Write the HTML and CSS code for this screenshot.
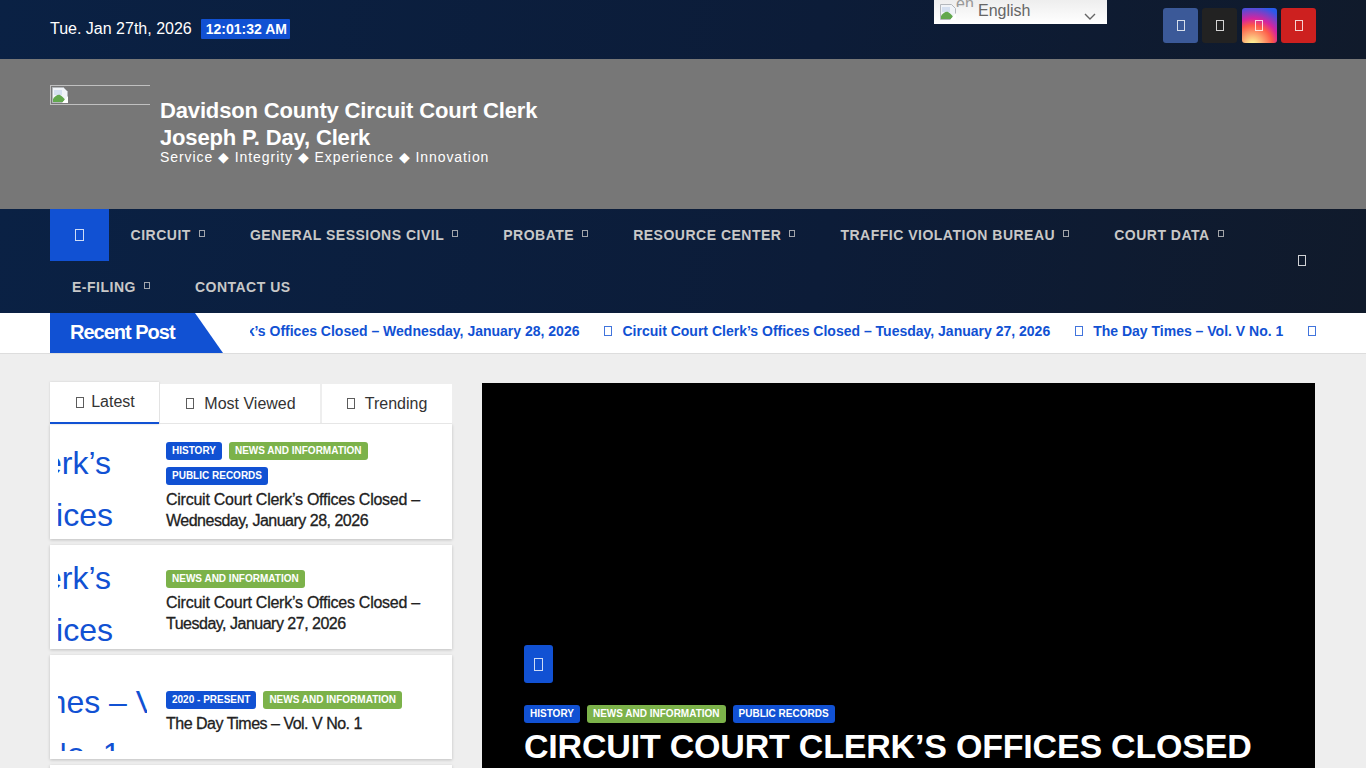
FILE: index.html
```html
<!DOCTYPE html>
<html lang="en">
  <head>
    <meta charset="UTF-8" />
    <meta name="viewport" content="width=device-width, initial-scale=1" />
    <title>Davidson County Circuit Court Clerk</title>
    <link rel="stylesheet" href="styles.css">
  </head>
  <body>
    <svg class="sprite" width="0" height="0" aria-hidden="true">
      <symbol id="broken" viewBox="0 0 16 16">
        <path d="M.5.5h11l4 4v11H.5z" fill="#f1f4f8" stroke="#b4b8bc" />
        <path d="M2 3h8v5H2z" fill="#d5e0f0" />
        <path d="M1 15v-3c2-3 5-5 7-4s4 3 5 5l-2 2z" fill="#62a84e" />
        <path d="M10 16l6-7v7z" fill="#fff" />
      </symbol>
    </svg>

    <header class="top-bar">
      <div class="date-wrap">
        <span class="date">Tue. Jan 27th, 2026</span>
        <span class="time">12:01:32 AM</span>
      </div>
      <div class="lang">
        <svg class="broken-icon"><use href="#broken" /></svg>
        <span class="lang-alt">en</span>
        <span class="lang-name">English</span>
        <svg class="lang-caret" viewBox="0 0 12 8"><path d="M1 1l5 5 5-5" fill="none" stroke="#666" stroke-width="1.4" /></svg>
      </div>
      <div class="socials">
        <a class="social fb"><i class="tofu"></i></a>
        <a class="social tw"><i class="tofu"></i></a>
        <a class="social ig"><i class="tofu"></i></a>
        <a class="social yt"><i class="tofu"></i></a>
      </div>
    </header>

    <div class="brand">
      <div class="logo-img"><svg class="broken-icon"><use href="#broken" /></svg></div>
      <div class="brand-text">
        <div class="brand-title">Davidson County Circuit Court Clerk<br />Joseph P. Day, Clerk</div>
        <div class="brand-sub">Service ◆ Integrity ◆ Experience ◆ Innovation</div>
      </div>
    </div>

    <nav class="nav">
      <ul class="nav-list">
        <li class="nav-home"><i class="tofu tofu-home"></i></li>
        <li class="nav-item">CIRCUIT <i class="tofu tofu-caret"></i></li>
        <li class="nav-item">GENERAL SESSIONS CIVIL <i class="tofu tofu-caret"></i></li>
        <li class="nav-item">PROBATE <i class="tofu tofu-caret"></i></li>
        <li class="nav-item">RESOURCE CENTER <i class="tofu tofu-caret"></i></li>
        <li class="nav-item">TRAFFIC VIOLATION BUREAU <i class="tofu tofu-caret"></i></li>
        <li class="nav-item">COURT DATA <i class="tofu tofu-caret"></i></li>
        <li class="nav-item">E-FILING <i class="tofu tofu-caret"></i></li>
        <li class="nav-item">CONTACT US</li>
      </ul>
      <i class="tofu nav-search"></i>
    </nav>

    <div class="ticker-bar">
      <div class="ticker-label">Recent Post</div>
      <div class="ticker">
        <div class="ticker-track">
          <span class="ticker-text">Circuit Court Clerk’s Offices Closed – Wednesday, January 28, 2026</span>
          <i class="tofu tofu-tick"></i>
          <span class="ticker-text">Circuit Court Clerk’s Offices Closed – Tuesday, January 27, 2026</span>
          <i class="tofu tofu-tick"></i>
          <span class="ticker-text">The Day Times – Vol. V No. 1</span>
          <i class="tofu tofu-tick"></i>
        </div>
      </div>
    </div>

    <main class="content">
      <section class="side">
        <div class="tabs">
          <div class="tab active"><i class="tofu tofu-tab"></i> Latest</div>
          <div class="tab tab-views"><i class="tofu tofu-tab"></i> Most Viewed</div>
          <div class="tab tab-trend"><i class="tofu tofu-tab"></i> Trending</div>
        </div>

        <article class="post post-first">
          <div class="thumb"><span>Circuit Court Clerk’s</span><span>Offices</span></div>
          <div class="post-body">
            <div class="tags">
              <a class="tag blue">History</a>
              <a class="tag green">News and Information</a>
              <a class="tag blue">Public Records</a>
            </div>
            <h4 class="post-title">Circuit Court Clerk’s Offices Closed – <span class="tight">Wednesday, January 28, 2026</span></h4>
          </div>
        </article>

        <article class="post">
          <div class="thumb"><span>Circuit Court Clerk’s</span><span>Offices</span></div>
          <div class="post-body">
            <div class="tags">
              <a class="tag green">News and Information</a>
            </div>
            <h4 class="post-title">Circuit Court Clerk’s Offices Closed – <span class="tight">Tuesday, January 27, 2026</span></h4>
          </div>
        </article>

        <article class="post post-day">
          <div class="thumb thumb-day"><span>The Day Times – Vol.</span><span>No. 1</span></div>
          <div class="post-body">
            <div class="tags">
              <a class="tag blue">2020 - Present</a>
              <a class="tag green">News and Information</a>
            </div>
            <h4 class="post-title"><span class="tight">The Day Times – Vol. V No. 1</span></h4>
          </div>
        </article>

        <article class="post"></article>
      </section>

      <section class="hero">
        <a class="hero-btn"><i class="tofu tofu-hero"></i></a>
        <div class="tags hero-tags">
          <a class="tag blue">History</a>
          <a class="tag green">News and Information</a>
          <a class="tag blue">Public Records</a>
        </div>
        <h2 class="hero-title">Circuit Court Clerk’s Offices Closed</h2>
      </section>
    </main>
  </body>
</html>
```

FILE: styles.css
```css
* {
  box-sizing: border-box;
}
html,
body {
  height: 768px;
  overflow: hidden;
}
body {
  margin: 0;
  font-family: "Liberation Sans", Arial, sans-serif;
  background-color: #eeeeee;
  color: #212121;
}
.sprite {
  position: absolute;
}
a {
  text-decoration: none;
}
/* icon font never loaded on the original, glyphs show as empty boxes */
.tofu {
  display: inline-block;
  width: 8px;
  height: 11px;
  border: 1px solid currentColor;
  flex: none;
  opacity: 0.8;
}
.broken-icon {
  width: 16px;
  height: 16px;
  display: block;
  flex: none;
}

.top-bar {
  height: 59px;
  padding: 0 50px;
  display: flex;
  justify-content: space-between;
  align-items: flex-start;
  color: #fff;
  background: linear-gradient(100deg, #0a2144, #0c1c38 60%, #101a2b);
}
.date-wrap {
  display: flex;
  align-items: center;
  gap: 9px;
  margin-top: 19px;
  width: 884px;
}
.date {
  font-size: 16px;
}
.time {
  background: #1151d3;
  font-size: 14px;
  font-weight: 700;
  padding: 1px 3px 1px 5px;
  height: 20px;
  line-height: 18px;
  border-radius: 1px;
}
.lang {
  width: 173px;
  height: 24px;
  background: linear-gradient(#eee, #fff);
  color: #666;
  font-size: 16px;
  display: flex;
  align-items: center;
  padding-left: 6px;
  position: relative;
  margin-right: 56px;
}
.lang-alt {
  font-size: 16px;
  line-height: 8px;
  height: 7px;
  width: 22px;
  overflow: hidden;
  color: #999;
  align-self: flex-start;
}
.lang-name {
  margin-top: -3px;
}
.lang-caret {
  width: 12px;
  height: 8px;
  position: absolute;
  right: 11px;
  top: 13px;
}
.socials {
  display: flex;
  gap: 4.3px;
  margin-top: 8px;
  margin-left: auto;
}
.social {
  width: 35px;
  height: 35px;
  border-radius: 3px;
  display: flex;
  align-items: center;
  justify-content: center;
  color: #fff;
}
.fb {
  background: #3b5998;
}
.tw {
  background: #222;
}
.ig {
  background: radial-gradient(circle at 30% 107%, #fdf497 0%, #fdf497 5%, #fd5949 45%, #d6249f 60%, #285aeb 90%);
}
.yt {
  background: #cd201f;
}

.brand {
  height: 150px;
  background: #777777;
  padding: 26px 50px 0;
  display: flex;
  gap: 10px;
  color: #fff;
}
.logo-img {
  width: 100px;
  height: 20px;
  border: 1px solid #c0c0c0;
  border-right: 0;
  padding: 1px;
}
.brand-text {
  padding-top: 12px;
}
.brand-title {
  font-size: 22px;
  font-weight: 700;
  line-height: 27px;
  letter-spacing: -0.15px;
}
.brand-sub {
  font-size: 14px;
  line-height: 12px;
  letter-spacing: 0.93px;
}

.nav {
  height: 104px;
  padding: 0 50px;
  display: flex;
  align-items: center;
  justify-content: space-between;
  background: linear-gradient(100deg, #0a2144, #0c1c38 60%, #101a2b);
  color: #c8c8c8;
}
.nav-list {
  list-style: none;
  margin: 0;
  padding: 0;
  display: flex;
  flex-wrap: wrap;
  width: 1220px;
}
.nav-home {
  width: 58.6px;
  height: 52px;
  background: #1151d3;
  color: #fff;
  display: flex;
  align-items: center;
  justify-content: center;
}
.tofu-home {
  width: 9px;
  height: 12px;
}
.nav-item {
  height: 52px;
  padding: 0 23px 0 22px;
  display: flex;
  align-items: center;
  gap: 8px;
  font-size: 14px;
  font-weight: 700;
  letter-spacing: 0.5px;
}
.tofu-caret {
  width: 6px;
  height: 7px;
  margin-top: -3px;
}
.nav-search {
  color: #fff;
  width: 8px;
  height: 11px;
  margin: -2px 10px 0 0;
}

.ticker-bar {
  height: 41px;
  padding: 0 50px;
  background: #fff;
  border-bottom: 1px solid #ddd;
  display: flex;
}
.ticker-label {
  width: 173px;
  height: 40px;
  padding-left: 20px;
  line-height: 38px;
  background: #1151d3;
  clip-path: polygon(0 0, 145px 0, 100% 100%, 0 100%);
  color: #fff;
  font-size: 20px;
  font-weight: 700;
  letter-spacing: -1px;
}
.ticker {
  margin-left: 27px;
  width: 1066px;
  overflow: hidden;
}
.ticker-track {
  display: flex;
  align-items: center;
  height: 36px;
  white-space: nowrap;
  margin-left: -120px;
  color: #1151d3;
  font-size: 14px;
  font-weight: 700;
}
.tofu-tick {
  width: 8px;
  height: 10px;
  margin: 0 10px 0 25px;
}

.content {
  padding: 29px 50px 0;
  display: flex;
  gap: 30px;
}
.side {
  width: 402px;
  flex: none;
}
.tabs {
  display: flex;
  height: 41px;
  gap: 1px;
  color: #333;
  font-size: 16px;
}
.tab {
  background: #fff;
  height: 39px;
  margin-top: 1px;
  display: flex;
  align-items: center;
  justify-content: center;
  gap: 10px;
}
.tab.active {
  width: 109px;
  height: 42px;
  margin-top: -1px;
  gap: 7px;
  padding-left: 2px;
  border-bottom: 2px solid #1151d3;
  box-shadow: 0 0 2px #ccc;
}
.tab-views {
  width: 160px;
  padding-left: 2px;
}
.tab-trend {
  width: 130px;
  margin-left: 1px;
}
.tofu-tab {
  width: 8px;
  height: 11px;
}
.post {
  background: #fff;
  height: 104px;
  margin-bottom: 6px;
  display: flex;
  align-items: center;
  box-shadow: 0 1px 3px rgba(0, 0, 0, 0.2);
}
.post-first {
  height: 115px;
}
.thumb {
  width: 89px;
  margin: 8px 0 8px 8px;
  flex: none;
  overflow: hidden;
  color: #1151d3;
  font-size: 32px;
  line-height: 52px;
  white-space: nowrap;
  align-self: stretch;
}
.thumb span {
  display: block;
  margin-top: -1px;
  margin-left: -231px;
}
.thumb span + span {
  margin-top: 0;
  margin-left: -44px;
}
.post-first .thumb span:first-child {
  margin-top: 5px;
}
.thumb-day span {
  margin-top: 13px;
  margin-left: -173px;
}
.thumb-day span + span {
  margin-left: -14px;
}
.post-body {
  margin-left: 19px;
  flex: 1;
  padding: 9px 20px 0 0;
}
.post-day .post-body {
  padding-top: 11px;
}
.tags {
  display: flex;
  flex-wrap: wrap;
  gap: 7px;
}
.tag {
  height: 18px;
  line-height: 18px;
  padding: 0 6px;
  border-radius: 3px;
  color: #fff;
  font-size: 10px;
  font-weight: 700;
  text-transform: uppercase;
}
.blue {
  background: #1151d3;
}
.green {
  background: #7cb24a;
}
.post-title {
  margin: 4px 0 0;
  font-size: 16px;
  line-height: 21px;
  font-weight: 400;
  letter-spacing: -0.25px;
  -webkit-text-stroke: 0.3px;
  color: #212121;
}
.tight {
  letter-spacing: -0.5px;
}

.hero {
  width: 833px;
  height: 385px;
  background: #000;
  padding: 262px 42px 0;
  color: #fff;
}
.hero-btn {
  width: 29px;
  height: 38px;
  background: #1151d3;
  border-radius: 3px;
  display: flex;
  align-items: center;
  justify-content: center;
}
.tofu-hero {
  width: 9px;
  height: 13px;
}
.hero-tags {
  margin-top: 22px;
}
.hero-title {
  margin: 3px 0 0;
  font-size: 34px;
  line-height: 40px;
  font-weight: 700;
  letter-spacing: -0.2px;
  text-transform: uppercase;
  white-space: nowrap;
}
```
